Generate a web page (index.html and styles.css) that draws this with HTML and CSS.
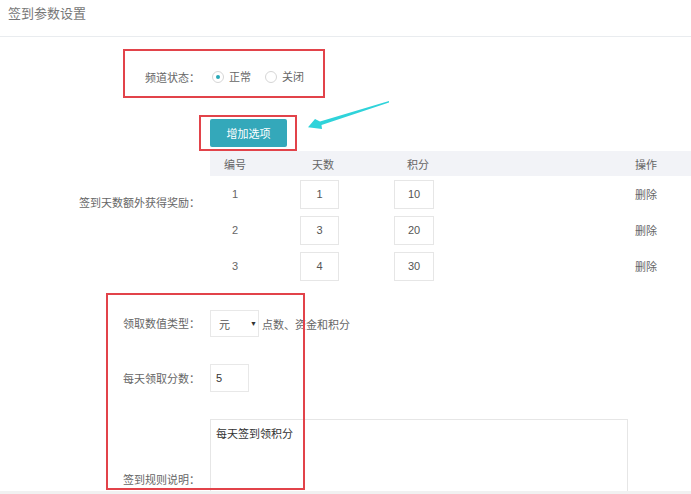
FILE: index.html
```html
<!DOCTYPE html>
<html lang="zh-CN">
<head>
<meta charset="utf-8">
<title>签到参数设置</title>
<link rel="stylesheet" href="styles.css">
</head>
<body>
<div class="page">
  <div class="header">签到参数设置</div>
  <div class="form">
    <div class="row row-status">
      <div class="label">频道状态<span class="colon">：</span></div>
      <div class="field radios">
        <label class="radio"><span class="dot checked"></span>正常</label>
        <label class="radio"><span class="dot"></span>关闭</label>
      </div>
    </div>
    <div class="row row-btn">
      <div class="label"></div>
      <div class="field"><button class="btn">增加选项</button></div>
    </div>
    <div class="row row-table">
      <div class="label label-table">签到天数额外获得奖励<span class="colon">：</span></div>
      <div class="table">
        <div class="tr thead">
          <div class="c1">编号</div><div class="c2">天数</div><div class="c3">积分</div><div class="c4">操作</div>
        </div>
        <div class="tr">
          <div class="c1">1</div><div class="c2"><span class="cell-input">1</span></div><div class="c3"><span class="cell-input wide">10</span></div><div class="c4">删除</div>
        </div>
        <div class="tr">
          <div class="c1">2</div><div class="c2"><span class="cell-input">3</span></div><div class="c3"><span class="cell-input wide">20</span></div><div class="c4">删除</div>
        </div>
        <div class="tr">
          <div class="c1">3</div><div class="c2"><span class="cell-input">4</span></div><div class="c3"><span class="cell-input wide">30</span></div><div class="c4">删除</div>
        </div>
      </div>
    </div>
    <div class="row row-type">
      <div class="label">领取数值类型<span class="colon">：</span></div>
      <div class="field">
        <span class="select">元<span class="caret">▼</span></span>
        <span class="hint">点数、资金和积分</span>
      </div>
    </div>
    <div class="row row-points">
      <div class="label">每天领取分数<span class="colon">：</span></div>
      <div class="field"><span class="input-sm">5</span></div>
    </div>
    <div class="row row-rule">
      <div class="label label-rule">签到规则说明<span class="colon">：</span></div>
      <div class="field"><div class="textarea">每天签到领积分</div></div>
    </div>
  </div>

  <div class="mark mark-1"></div>
  <div class="mark mark-2"></div>
  <div class="mark mark-3"></div>
  <svg class="arrow" width="691" height="494" viewBox="0 0 691 494">
    <polygon points="389,101 320,121.5 315,119 308,127.3 322,129 321.5,125 389,102.6" fill="#2fd3da"/>
  </svg>
</div>
<div class="footer"></div>
</body>
</html>
```

FILE: styles.css
```css
* { box-sizing: border-box; }
html, body { margin: 0; padding: 0; background: #fff; }
body {
  font-family: "Liberation Sans", "Noto Sans CJK SC", sans-serif;
  font-size: 11px;
  color: #666;
  width: 691px;
  height: 494px;
  overflow: hidden;
}
.page {
  position: relative;
  height: 491px;
  overflow: hidden;
}
.header {
  height: 37px;
  padding: 5px 0 0 8px;
  font-size: 13px;
  line-height: 18px;
  color: #777;
  border-bottom: 1px solid #e9ecef;
}
.row {
  display: flex;
  align-items: center;
}
.label {
  width: 200px;
  flex: none;
  text-align: right;
  line-height: 18px;
  color: #666;
}
.colon {
  font-family: "Noto Sans CJK JP", "Noto Sans CJK SC", sans-serif;
}
.field {
  margin-left: 10px;
  display: flex;
  align-items: center;
}
.row-status { margin-top: 31px; height: 18px; }
.field.radios { margin-left: 12px; }
.radio { display: flex; align-items: center; margin-right: 14px; color: #666; line-height: 18px; }
.dot {
  width: 12px; height: 12px;
  border: 1px solid #d6d6d6;
  border-radius: 50%;
  margin-right: 5px;
  position: relative;
}
.dot.checked::after {
  content: "";
  position: absolute;
  left: 3px; top: 3px;
  width: 4px; height: 4px;
  border-radius: 50%;
  background: #2aa9b8;
}
.row-btn { margin-top: 33px; }
.btn {
  width: 77px; height: 28px;
  border: none;
  border-radius: 2px;
  background: #34a8ba;
  color: #fff;
  font-family: inherit;
  font-size: 11px;
  padding: 0;
}
.row-table { margin-top: 4px; align-items: flex-start; }
.label-table { padding-top: 42px; }
.table { margin-left: 10px; width: 481px; }
.tr {
  display: grid;
  grid-template-columns: 90px 94px 1fr 56px;
  height: 36px;
  align-items: center;
  color: #666;
}
.thead { height: 25px; background: #f2f3f7; }
.thead .c2 { padding-left: 12px; }
.thead .c3 { padding-left: 13px; }
.c1 { width: 50px; text-align: center; }
.cell-input {
  display: flex;
  align-items: center;
  justify-content: center;
  width: 39px; height: 29px;
  border: 1px solid #e6e6e6;
  color: #555;
}
.cell-input.wide { width: 40px; }
.row-type { margin-top: 26px; }
.select {
  display: flex;
  align-items: center;
  width: 49px; height: 27px;
  border: 1px solid #e8e8e8;
  padding-left: 8px;
  color: #555;
  position: relative;
}
.caret { font-size: 7px; position: absolute; left: 39px; top: 9px; color: #333; }
.hint { margin-left: 3px; color: #666; }
.row-points { margin-top: 27px; }
.input-sm {
  display: flex; align-items: center;
  width: 39px; height: 28px;
  border: 1px solid #e8e8e8;
  padding-left: 5px;
  color: #333;
}
.row-rule { margin-top: 27px; align-items: flex-start; }
.label-rule { padding-top: 51px; }
.textarea {
  width: 418px; height: 90px;
  border: 1px solid #e6e6e6;
  padding: 7px 0 0 5px;
  line-height: 15px;
  color: #333;
}
.footer { height: 3px; background: #f1f1f1; }
.mark {
  position: absolute;
  border: 2px solid #e2434a;
}
.mark-1 { left: 123px; top: 49px; width: 202px; height: 49px; }
.mark-2 { left: 199px; top: 115px; width: 98px; height: 36px; }
.mark-3 { left: 106px; top: 293px; width: 199px; height: 197px; }
.arrow { position: absolute; left: 0; top: 0; pointer-events: none; }
```
